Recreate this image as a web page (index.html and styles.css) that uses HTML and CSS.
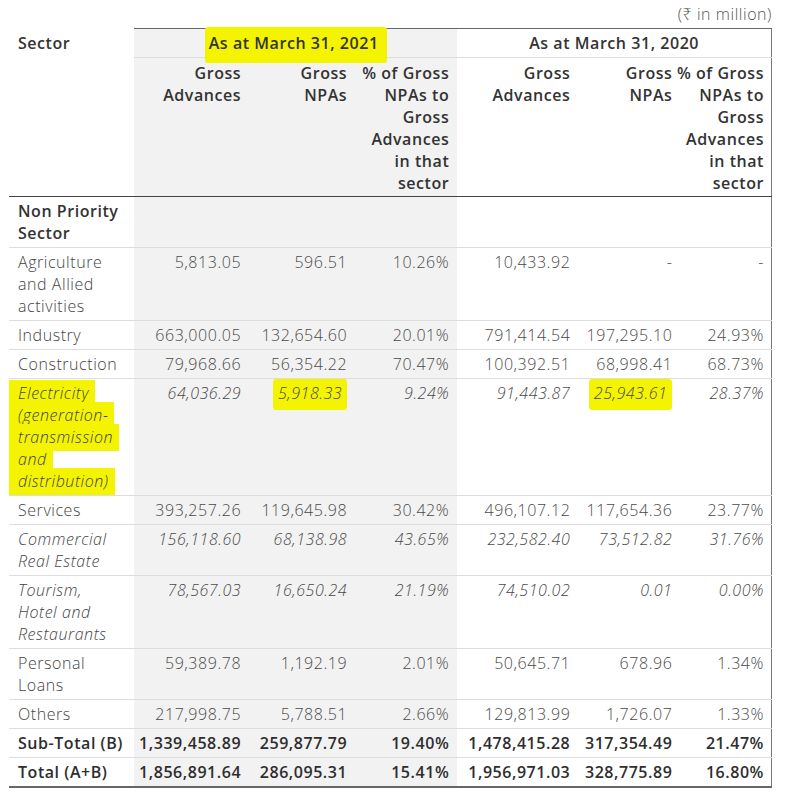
FILE: index.html
```html
<!DOCTYPE html>
<html lang="en">
<head>
<meta charset="utf-8">
<title>Sector-wise NPAs</title>
<link rel="stylesheet" href="styles.css">
</head>
<body>
<div class="wrap">
  <div class="unit">(₹ in million)</div>
  <table class="npa">
    <colgroup>
      <col class="c-sector">
      <col class="c-a1">
      <col class="c-a2">
      <col class="c-a3">
      <col class="c-b1">
      <col class="c-b2">
      <col class="c-b3">
    </colgroup>
    <thead>
      <tr class="h1">
        <th class="sector" rowspan="2">Sector</th>
        <th class="yr shade" colspan="3"><span class="hl hl-big">As at March 31, 2021</span></th>
        <th class="yr" colspan="3">As at March 31, 2020</th>
      </tr>
      <tr class="h2">
        <th class="shade">Gross<br>Advances</th>
        <th class="shade">Gross<br>NPAs</th>
        <th class="shade">% of Gross<br>NPAs to<br>Gross<br>Advances<br>in that<br>sector</th>
        <th>Gross<br>Advances</th>
        <th class="tight">Gross<br>NPAs</th>
        <th class="last">% of Gross<br>NPAs to<br>Gross<br>Advances<br>in that<br>sector</th>
      </tr>
    </thead>
    <tbody>
      <tr class="group">
        <td>Non Priority Sector</td>
        <td class="shade"></td><td class="shade"></td><td class="shade"></td>
        <td></td><td class="tight"></td><td class="last"></td>
      </tr>
      <tr>
        <td>Agriculture and Allied activities</td>
        <td class="shade">5,813.05</td><td class="shade">596.51</td><td class="shade">10.26%</td>
        <td>10,433.92</td><td class="tight">-</td><td class="last">-</td>
      </tr>
      <tr>
        <td>Industry</td>
        <td class="shade">663,000.05</td><td class="shade">132,654.60</td><td class="shade">20.01%</td>
        <td>791,414.54</td><td class="tight">197,295.10</td><td class="last">24.93%</td>
      </tr>
      <tr>
        <td>Construction</td>
        <td class="shade">79,968.66</td><td class="shade">56,354.22</td><td class="shade">70.47%</td>
        <td>100,392.51</td><td class="tight">68,998.41</td><td class="last">68.73%</td>
      </tr>
      <tr class="it">
        <td><span class="hl blob">Electricity (generation-transmission and distribution)</span></td>
        <td class="shade">64,036.29</td><td class="shade"><span class="hl">5,918.33</span></td><td class="shade">9.24%</td>
        <td>91,443.87</td><td class="tight"><span class="hl">25,943.61</span></td><td class="last">28.37%</td>
      </tr>
      <tr>
        <td>Services</td>
        <td class="shade">393,257.26</td><td class="shade">119,645.98</td><td class="shade">30.42%</td>
        <td>496,107.12</td><td class="tight">117,654.36</td><td class="last">23.77%</td>
      </tr>
      <tr class="it">
        <td>Commercial Real Estate</td>
        <td class="shade">156,118.60</td><td class="shade">68,138.98</td><td class="shade">43.65%</td>
        <td>232,582.40</td><td class="tight">73,512.82</td><td class="last">31.76%</td>
      </tr>
      <tr class="it">
        <td>Tourism, Hotel and Restaurants</td>
        <td class="shade">78,567.03</td><td class="shade">16,650.24</td><td class="shade">21.19%</td>
        <td>74,510.02</td><td class="tight">0.01</td><td class="last">0.00%</td>
      </tr>
      <tr>
        <td>Personal Loans</td>
        <td class="shade">59,389.78</td><td class="shade">1,192.19</td><td class="shade">2.01%</td>
        <td>50,645.71</td><td class="tight">678.96</td><td class="last">1.34%</td>
      </tr>
      <tr>
        <td>Others</td>
        <td class="shade">217,998.75</td><td class="shade">5,788.51</td><td class="shade">2.66%</td>
        <td>129,813.99</td><td class="tight">1,726.07</td><td class="last">1.33%</td>
      </tr>
      <tr class="tot">
        <td class="nw">Sub-Total (B)</td>
        <td class="shade">1,339,458.89</td><td class="shade">259,877.79</td><td class="shade">19.40%</td>
        <td>1,478,415.28</td><td class="tight">317,354.49</td><td class="last">21.47%</td>
      </tr>
      <tr class="tot">
        <td class="nw">Total (A+B)</td>
        <td class="shade">1,856,891.64</td><td class="shade">286,095.31</td><td class="shade">15.41%</td>
        <td>1,956,971.03</td><td class="tight">328,775.89</td><td class="last">16.80%</td>
      </tr>
    </tbody>
  </table>
</div>
</body>
</html>
```

FILE: styles.css
```css
html, body {
  margin: 0;
  padding: 0;
  background: #ffffff;
}

body {
  font-family: "Open Sans", "Noto Sans", sans-serif;
  font-size: 16px;
  line-height: 22px;
  letter-spacing: 0.55px;
  color: #4a4a4a;
}

.wrap {
  width: 763px;
  padding: 3px 0 0 9px;
}

.unit {
  text-align: right;
  font-weight: 300;
  color: #555555;
  height: 25px;
}

.npa {
  width: 763px;
  border-collapse: collapse;
  table-layout: fixed;
  border-right: 1px solid #7a7a7a;
  border-bottom: 2px solid #666666;
}

.c-sector { width: 125px; }
.c-a1 { width: 115px; }
.c-a2 { width: 106px; }
.c-a3 { width: 102px; }
.c-b1 { width: 121px; }
.c-b2 { width: 98px; }
.c-b3 { width: 95px; }

th, td {
  padding: 3px 8px 3px 2px;
  vertical-align: top;
  text-align: right;
}

th.tight, td.tight {
  padding-right: 4px;
}

th.last, td.last {
  padding-left: 0;
  padding-right: 7px;
}

th {
  font-weight: 600;
  color: #333333;
  white-space: nowrap;
}

td {
  font-weight: 300;
  color: #4a4a4a;
  border-top: 1px solid #dddddd;
}

td:first-child {
  text-align: left;
  padding-left: 9px;
  padding-right: 12px;
  color: #444444;
}

.shade {
  background: #f2f2f2;
}

.h1 th {
  border-top: 1px solid #666666;
}

.h1 th.sector {
  border-top: none;
  text-align: left;
  padding-left: 9px;
  border-bottom: 1px solid #444444;
}

.h1 th.yr {
  text-align: center;
  border-bottom: 1px solid #dddddd;
  padding-right: 2px;
}

.h2 th {
  padding-top: 4px;
  padding-bottom: 2px;
  border-bottom: 1px solid #444444;
}

tbody tr:first-child td {
  border-top: none;
}

.group td:first-child {
  font-weight: 600;
  color: #333333;
}

.it td {
  font-style: italic;
}

.tot td {
  font-weight: 600;
  color: #2e2e2e;
}

.nw {
  white-space: nowrap;
}

.hl {
  background: #f4f400;
  padding: 3px 5px 6px;
  border-radius: 3px;
}

.hl-big {
  padding: 5px 8px 9px 4px;
}

.blob {
  padding: 2px 6px 3px 9px;
  margin-left: -9px;
  -webkit-box-decoration-break: clone;
  box-decoration-break: clone;
  border-radius: 0;
}
```
